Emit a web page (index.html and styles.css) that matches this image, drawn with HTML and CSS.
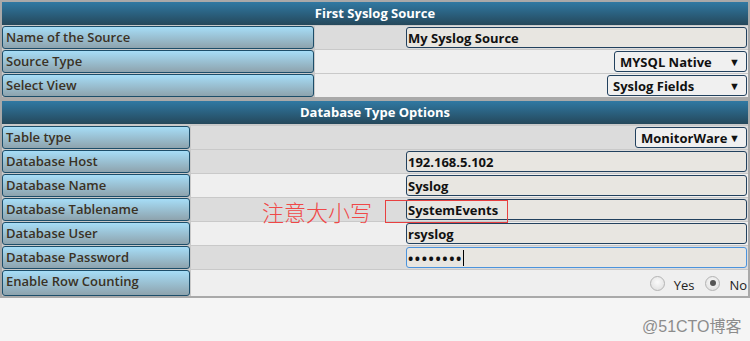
FILE: index.html
```html
<!DOCTYPE html>
<html>
<head>
<meta charset="utf-8">
<link rel="stylesheet" href="styles.css">
</head>
<body>
<div class="page">
  <section class="tbl t1">
    <div class="hdr">First Syslog Source</div>
    <div class="row"><div class="lbl">Name of the Source</div><div class="val dark"><span class="inp">My Syslog Source</span></div></div>
    <div class="row"><div class="lbl">Source Type</div><div class="val light"><span class="sel w133"><span>MYSQL Native</span><span class="arr">▼</span></span></div></div>
    <div class="row"><div class="lbl">Select View</div><div class="val light"><span class="sel w140"><span>Syslog Fields</span><span class="arr">▼</span></span></div></div>
  </section>
  <section class="tbl t2">
    <div class="hdr">Database Type Options</div>
    <div class="row"><div class="lbl">Table type</div><div class="val dark"><span class="sel w112"><span>MonitorWare</span><span class="arr">▼</span></span></div></div>
    <div class="row"><div class="lbl">Database Host</div><div class="val dark"><span class="inp">192.168.5.102</span></div></div>
    <div class="row"><div class="lbl">Database Name</div><div class="val light"><span class="inp">Syslog</span></div></div>
    <div class="row"><div class="lbl">Database Tablename</div><div class="val dark"><span class="inp">SystemEvents</span></div></div>
    <div class="row"><div class="lbl">Database User</div><div class="val light"><span class="inp">rsyslog</span></div></div>
    <div class="row"><div class="lbl">Database Password</div><div class="val dark"><span class="inp focus"><span class="dots">••••••••</span><span class="caret"></span></span></div></div>
    <div class="row tall"><div class="lbl">Enable Row Counting</div><div class="val light radios"><span class="radio"></span><span class="rtxt">Yes</span><span class="radio on"></span><span class="rtxt">No</span></div></div>
  </section>
  <div class="note">注意大小写</div>
  <div class="notebox"></div>
  <div class="wm">@51CTO博客</div>
</div>
</body>
</html>
```
FILE: styles.css
```css
html, body { margin: 0; padding: 0; }
body {
  background: #f5f5f5;
  font-family: "Open Sans", "Noto Sans", sans-serif;
  font-size: 13px;
}
.page { position: relative; width: 750px; height: 341px; overflow: hidden; }
.tbl {
  border: 2px solid #a9a9a9;
  background: #c9c9c9;
  display: flex;
  flex-direction: column;
  gap: 1px;
}
.hdr {
  height: 23px;
  line-height: 23px;
  text-align: center;
  color: #fff;
  font-weight: 700;
  font-size: 13px;
  background: linear-gradient(#3079a3, #25485b);
}
.t2 .hdr { margin-bottom: 1px; }
.row { display: flex; height: 23px; gap: 1px; }
.row.tall { height: 26px; }
.lbl {
  box-sizing: border-box;
  flex: none;
  border: 1px solid #1d4e6a;
  border-radius: 3px;
  background: linear-gradient(#a6ddf7, #8ea3ad);
  padding-left: 3px;
  font-weight: 600;
  color: #3a3124;
  font-size: 13px;
  line-height: 20px;
  white-space: nowrap;
}
.t1 .lbl { width: 312px; }
.t2 .lbl { width: 188px; }
.val {
  flex: 1;
  display: flex;
  justify-content: flex-end;
  align-items: center;
  padding-right: 1px;
}
.val.dark { background: #dcdcdc; }
.val.light { background: #efefef; }
.inp {
  box-sizing: border-box;
  width: 341px;
  height: 21px;
  border: 1px solid #22415e;
  border-radius: 3px;
  background: #e8e6e1;
  font-weight: 700;
  color: #111;
  padding-left: 1px;
  padding-top: 1px;
  line-height: 19px;
  display: flex;
  align-items: center;
}
.inp.focus { border-color: #4b93dc; }
.dots { letter-spacing: 1.6px; font-size: 14px; }
.caret { display: inline-block; width: 1px; height: 16px; background: #000; }
.sel {
  box-sizing: border-box;
  height: 21px;
  border: 1px solid #22415e;
  border-radius: 3px;
  background: #f0f0f0;
  font-weight: 700;
  color: #111;
  display: flex;
  align-items: center;
  justify-content: space-between;
  padding: 0 6px 0 5px;
}
.arr { font-size: 11px; }
.w133 { width: 133px; }
.w140 { width: 140px; }
.w112 { width: 112px; }
.radios { gap: 9px; }
.radio {
  box-sizing: border-box;
  width: 15px;
  height: 15px;
  border-radius: 50%;
  border: 1px solid #b4b4b4;
  background: radial-gradient(circle at 50% 40%, #fafafa, #dcdcdc);
  display: flex;
  align-items: center;
  justify-content: center;
  margin-left: 2px;
}
.radio.on::after {
  content: "";
  width: 6px;
  height: 6px;
  border-radius: 50%;
  background: #555;
}
.rtxt { color: #222; font-size: 13px; margin-top: 4px; }
.note {
  position: absolute;
  left: 262px;
  top: 195px;
  font-family: "Noto Sans CJK SC", sans-serif;
  font-weight: 300;
  font-size: 22px;
  color: #f04848;
}
.notebox {
  position: absolute;
  left: 385px;
  top: 200px;
  width: 121px;
  height: 21px;
  border: 1px solid #e84040;
}
.wm {
  position: absolute;
  left: 642px;
  top: 313px;
  font-family: "Liberation Sans", "Noto Sans CJK SC", sans-serif;
  font-size: 16px;
  color: #8c8c8c;
}
```
